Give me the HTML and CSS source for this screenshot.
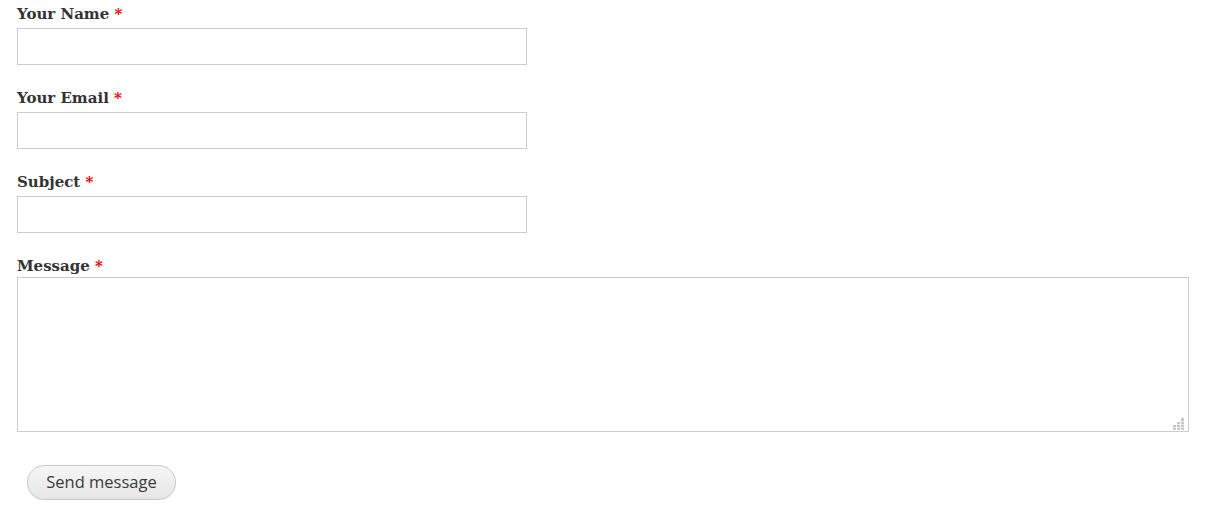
FILE: index.html
```html
<!DOCTYPE html>
<html>
<head>
<meta charset="utf-8">
<link rel="stylesheet" href="styles.css">
</head>
<body>
<form class="contact-form">
  <div class="form-item">
    <label class="form-label">Your Name <span class="req">*</span></label>
    <input class="form-text" type="text">
  </div>
  <div class="form-item">
    <label class="form-label">Your Email <span class="req">*</span></label>
    <input class="form-text" type="text">
  </div>
  <div class="form-item">
    <label class="form-label">Subject <span class="req">*</span></label>
    <input class="form-text" type="text">
  </div>
  <div class="form-item form-item-message">
    <label class="form-label">Message <span class="req">*</span></label>
    <div class="textarea-wrap">
      <textarea class="form-textarea"></textarea>
      <svg class="grippie" width="12" height="12" viewBox="0 0 12 12">
        <rect x="0" y="7" width="3" height="5" fill="#c8c8c8"/>
        <rect x="4" y="4" width="3" height="8" fill="#c8c8c8"/>
        <rect x="8" y="0" width="3" height="12" fill="#c8c8c8"/>
        <g fill="#e8e8e8">
          <rect x="0" y="9" width="3" height="1"/>
          <rect x="4" y="6" width="3" height="1"/>
          <rect x="4" y="9" width="3" height="1"/>
          <rect x="8" y="3" width="3" height="1"/>
          <rect x="8" y="6" width="3" height="1"/>
          <rect x="8" y="9" width="3" height="1"/>
        </g>
      </svg>
    </div>
  </div>
  <div class="form-actions">
    <button class="form-submit" type="button">Send message</button>
  </div>
</form>
</body>
</html>
```
FILE: styles.css
```css
html, body {
  margin: 0;
  padding: 0;
  background: #fff;
}
.contact-form {
  padding: 3px 27px 0 17px;
  display: flex;
  flex-direction: column;
}
.form-item {
  display: flex;
  flex-direction: column;
  margin-bottom: 22px;
}
.form-label {
  font-family: "DejaVu Serif", Georgia, serif;
  font-weight: bold;
  font-size: 15px;
  line-height: 20px;
  color: #333;
  margin-top: 1px;
  margin-bottom: 4px;
}
.req {
  color: #e00;
}
.form-text {
  box-sizing: border-box;
  width: 510px;
  height: 37px;
  border: 1px solid #ccc;
  margin: 0;
  padding: 4px 6px;
  font-size: 14px;
  outline: none;
}
.form-item-message {
  margin-bottom: 0;
}
.form-item-message .form-label {
  margin-bottom: 1px;
}
.textarea-wrap {
  position: relative;
  width: 1172px;
  height: 155px;
}
.form-textarea {
  box-sizing: border-box;
  display: block;
  width: 100%;
  height: 100%;
  border: 1px solid #ccc;
  margin: 0;
  resize: none;
  outline: none;
}
.grippie {
  position: absolute;
  right: 4px;
  bottom: 2px;
}
.form-actions {
  padding: 33px 0 0 10px;
}
.form-submit {
  box-sizing: border-box;
  width: 149px;
  height: 35px;
  border: 1px solid #c8c8c8;
  border-radius: 18px;
  background: linear-gradient(#f6f6f6, #e6e6e6);
  font-family: "Open Sans", "DejaVu Sans", sans-serif;
  font-size: 16.5px;
  line-height: 20px;
  color: #3a3a3a;
  padding: 0 0 1px;
  margin: 0;
  box-shadow: 0 1px 1px rgba(0,0,0,0.05);
}
```
